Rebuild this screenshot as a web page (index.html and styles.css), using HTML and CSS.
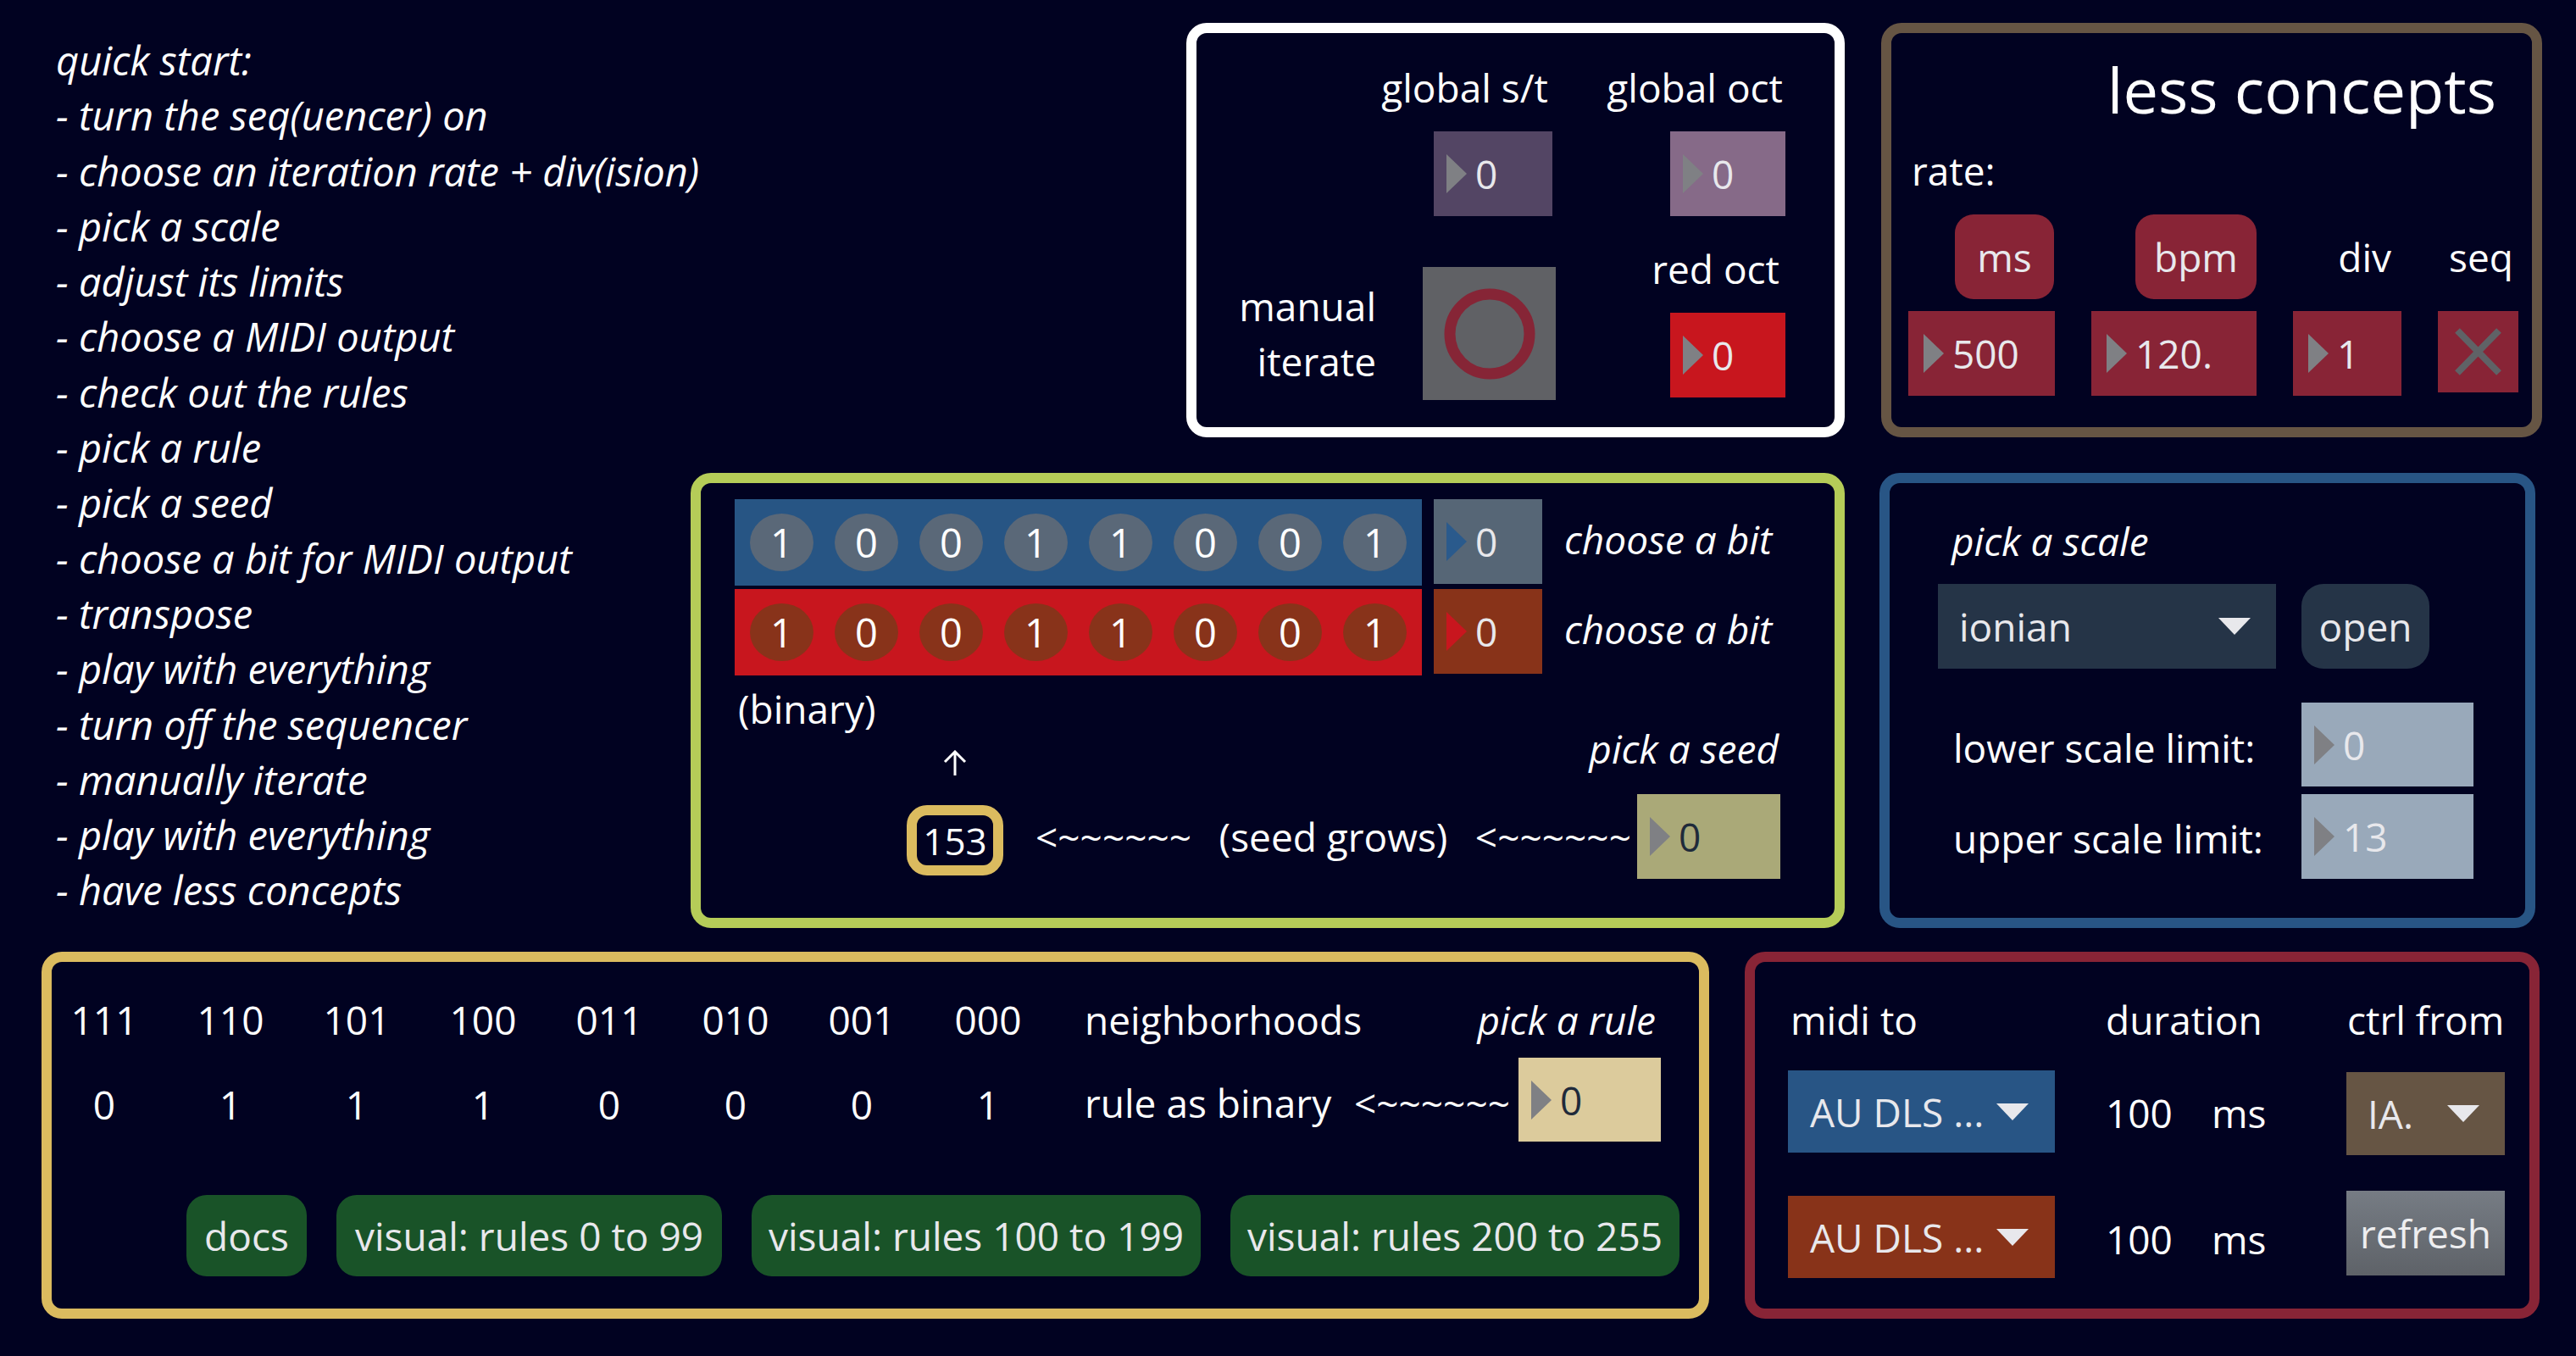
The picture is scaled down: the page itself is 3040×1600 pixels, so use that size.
FILE: index.html
```html
<!DOCTYPE html>
<html lang="en">
<head>
<meta charset="utf-8">
<title>less concepts</title>
<link rel="stylesheet" href="styles.css">
</head>
<body>
<main class="page">
  <div class="top">
    <div class="quick">
      <div>quick start:</div>
      <div>- turn the seq(uencer) on</div>
      <div>- choose an iteration rate + div(ision)</div>
      <div>- pick a scale</div>
      <div>- adjust its limits</div>
      <div>- choose a MIDI output</div>
      <div>- check out the rules</div>
      <div>- pick a rule</div>
      <div>- pick a seed</div>
      <div>- choose a bit for MIDI output</div>
      <div>- transpose</div>
      <div>- play with everything</div>
      <div>- turn off the sequencer</div>
      <div>- manually iterate</div>
      <div>- play with everything</div>
      <div>- have less concepts</div>
    </div>

    <section class="panel p-white">
      <div class="lbl w-lbl-st">global s/t</div>
      <div class="lbl w-lbl-oct">global oct</div>
      <div class="num w-st"><span class="tri"></span><span>0</span></div>
      <div class="num w-oct"><span class="tri"></span><span>0</span></div>
      <div class="w-manual">manual<br>iterate</div>
      <div class="w-btn">
        <svg width="120" height="120" viewBox="0 0 120 120"><circle cx="60" cy="60" r="47" fill="none" stroke="#862536" stroke-width="13"/></svg>
      </div>
      <div class="lbl w-lbl-red">red oct</div>
      <div class="num w-red"><span class="tri"></span><span>0</span></div>
    </section>

    <section class="panel p-brown">
      <div class="b-title">less concepts</div>
      <div class="lbl b-rate">rate:</div>
      <div class="btn b-ms">ms</div>
      <div class="btn b-bpm">bpm</div>
      <div class="lbl b-div">div</div>
      <div class="lbl b-seq">seq</div>
      <div class="num b-box b-500"><span class="tri"></span><span>500</span></div>
      <div class="num b-box b-120"><span class="tri"></span><span>120.</span></div>
      <div class="num b-box b-1"><span class="tri"></span><span>1</span></div>
      <div class="b-x">
        <svg width="95" height="96" viewBox="0 0 95 96"><path d="M23 23 L72 73 M72 23 L23 73" stroke="#5f6266" stroke-width="8" fill="none"/></svg>
      </div>
    </section>

    <section class="panel p-green">
      <div class="bits">
        <div class="bitbar bb-blue">
          <span class="bit">1</span><span class="bit">0</span><span class="bit">0</span><span class="bit">1</span><span class="bit">1</span><span class="bit">0</span><span class="bit">0</span><span class="bit">1</span>
        </div>
        <div class="num g-bluebox"><span class="tri"></span><span>0</span></div>
        <div class="lbl it g-choose">choose a bit</div>
        <div class="bitbar bb-red">
          <span class="bit">1</span><span class="bit">0</span><span class="bit">0</span><span class="bit">1</span><span class="bit">1</span><span class="bit">0</span><span class="bit">0</span><span class="bit">1</span>
        </div>
        <div class="num g-redbox"><span class="tri"></span><span>0</span></div>
        <div class="lbl it g-choose">choose a bit</div>
      </div>
      <div class="seedgrid">
        <div class="lbl g-binary">(binary)</div>
        <div class="g-up">
          <svg width="28" height="30" viewBox="0 0 28 30"><path d="M14 2 V30 M2 14 L14 2 L26 14" stroke="#ffffff" stroke-width="3" fill="none"/></svg>
        </div>
        <div class="lbl it g-seedlbl">pick a seed</div>
        <div class="g-out">153</div>
        <div class="g-flow"><span>&lt;~~~~~~</span><span>(seed grows)</span><span>&lt;~~~~~~</span></div>
        <div class="num g-seed"><span class="tri"></span><span>0</span></div>
      </div>
    </section>

    <section class="panel p-blue">
      <div class="lbl it s-title">pick a scale</div>
      <div class="dd s-dd"><span>ionian</span><span class="dtri"></span></div>
      <div class="btn s-open">open</div>
      <div class="lbl s-lower-l">lower scale limit:</div>
      <div class="num s-box s-lower"><span class="tri"></span><span>0</span></div>
      <div class="lbl s-upper-l">upper scale limit:</div>
      <div class="num s-box s-upper"><span class="tri"></span><span>13</span></div>
    </section>
  </div>

  <div class="bottom">
    <section class="panel p-gold">
      <div class="rules">
        <div class="nb">111</div><div class="nb">110</div><div class="nb">101</div><div class="nb">100</div><div class="nb">011</div><div class="nb">010</div><div class="nb">001</div><div class="nb">000</div>
        <div class="r-head"><span>neighborhoods</span><span class="it">pick a rule</span></div>
        <div class="rv">0</div><div class="rv">1</div><div class="rv">1</div><div class="rv">1</div><div class="rv">0</div><div class="rv">0</div><div class="rv">0</div><div class="rv">1</div>
        <div class="r-row">
          <span class="r-txt">rule as binary</span>
          <span class="r-txt r-arrow">&lt;~~~~~~</span>
          <div class="num r-box"><span class="tri"></span><span>0</span></div>
        </div>
      </div>
      <div class="r-btns">
        <div class="gbtn w-docs">docs</div>
        <div class="gbtn w-v1">visual: rules 0 to 99</div>
        <div class="gbtn w-v2">visual: rules 100 to 199</div>
        <div class="gbtn w-v3">visual: rules 200 to 255</div>
      </div>
    </section>

    <section class="panel p-red">
      <div class="lbl m-h1">midi to</div>
      <div class="lbl m-h2">duration</div>
      <div class="lbl m-h3">ctrl from</div>
      <div class="dd m-au1"><span>AU DLS ...</span><span class="dtri"></span></div>
      <div class="m-dur m-dur1"><span class="m-v">100</span><span>ms</span></div>
      <div class="dd m-ia"><span>IA.</span><span class="dtri"></span></div>
      <div class="dd m-au2"><span>AU DLS ...</span><span class="dtri"></span></div>
      <div class="m-dur m-dur2"><span class="m-v">100</span><span>ms</span></div>
      <div class="m-refresh">refresh</div>
    </section>
  </div>
</main>
</body>
</html>
```

FILE: styles.css
```css
html, body {
  margin: 0;
  padding: 0;
  background: #010221;
}
body {
  width: 3040px;
  height: 1600px;
  overflow: hidden;
  font-family: "Open Sans", "Noto Sans", sans-serif;
  font-size: 46px;
  color: #ffffff;
}
.page {
  padding-top: 27px;
}
.top {
  display: grid;
  grid-template-columns: 66px 749px 585px 777px 43px 780px;
  grid-template-rows: 489px 537px;
  row-gap: 42px;
}
.bottom {
  display: flex;
  gap: 42px;
  margin-top: 28px;
  padding-left: 49px;
}
.it { font-style: italic; }
.lbl {
  line-height: 60px;
  white-space: nowrap;
}

/* quick start */
.quick {
  grid-column: 2;
  grid-row: 1 / 3;
  padding-top: 12px;
  font-style: italic;
  font-size: 47px;
  line-height: 65.3px;
  white-space: nowrap;
}

/* panels */
.panel {
  box-sizing: border-box;
  border: 12px solid #fff;
  border-radius: 24px;
}

/* number boxes */
.num {
  box-sizing: border-box;
  display: flex;
  align-items: center;
  height: 100px;
  padding-left: 15px;
  color: #e8e8ec;
  font-size: 46px;
  white-space: nowrap;
}
.tri {
  flex: none;
  width: 0;
  height: 0;
  border-top: 23px solid transparent;
  border-bottom: 23px solid transparent;
  border-left: 24px solid #7f8084;
  margin-right: 10px;
}

/* buttons */
.btn {
  box-sizing: border-box;
  display: flex;
  align-items: center;
  justify-content: center;
  border-radius: 22px;
  color: #e8e8ec;
  height: 100px;
}

/* dropdown */
.dd {
  box-sizing: border-box;
  display: flex;
  align-items: center;
  justify-content: space-between;
  color: #e8e8ec;
  padding-left: 25px;
  padding-right: 30px;
  white-space: nowrap;
}
.dtri {
  flex: none;
  width: 0;
  height: 0;
  border-left: 19px solid transparent;
  border-right: 19px solid transparent;
  border-top: 20px solid #e8e8ec;
}

/* white panel */
.p-white {
  grid-column: 4;
  grid-row: 1;
  border-color: #ffffff;
  display: grid;
  grid-template-columns: 212px 157px 216px;
  column-gap: 55px;
  grid-template-rows: 82px 100px 114px 100px;
  align-content: start;
  padding-top: 34px;
}
.w-lbl-st {
  grid-column: 1 / 3;
  grid-row: 1;
  align-self: start;
  text-align: right;
  padding-right: 9px;
}
.w-lbl-oct {
  grid-column: 3;
  grid-row: 1;
  align-self: start;
  text-align: right;
  padding-right: 3px;
}
.w-st {
  grid-column: 2;
  grid-row: 2;
  width: 140px;
  justify-self: end;
  margin-right: 4px;
  background: #534564;
}
.w-oct {
  grid-column: 3;
  grid-row: 2;
  width: 136px;
  justify-self: end;
  background: #866a88;
}
.w-lbl-red {
  grid-column: 3;
  grid-row: 3;
  align-self: end;
  margin-bottom: 22px;
  text-align: right;
  padding-right: 7px;
}
.w-red {
  grid-column: 3;
  grid-row: 4;
  width: 136px;
  justify-self: end;
  background: #c8161e;
}
.w-btn {
  grid-column: 2;
  grid-row: 3 / 5;
  align-self: start;
  margin-top: 60px;
  width: 157px;
  height: 157px;
  background: #606165;
  display: flex;
  align-items: center;
  justify-content: center;
}
.w-manual {
  grid-column: 1;
  grid-row: 3 / 5;
  align-self: start;
  margin-top: 74px;
  text-align: right;
  line-height: 65px;
}

/* brown panel */
.p-brown {
  grid-column: 6;
  grid-row: 1;
  border-color: #665544;
  display: grid;
  grid-template-columns: 173px 195px 128px 95px;
  column-gap: 43px;
  grid-template-rows: 90px 102px 100px 114px;
  align-content: start;
  padding: 22px 0 0 20px;
}
.b-title {
  grid-column: 1 / -1;
  grid-row: 1;
  text-align: right;
  padding-right: 26px;
  font-size: 74px;
  line-height: 90px;
  white-space: nowrap;
}
.b-rate {
  grid-column: 1;
  grid-row: 2;
  align-self: start;
  margin-top: 20px;
  padding-left: 4px;
}
.b-ms {
  grid-column: 1;
  grid-row: 3;
  justify-self: end;
  width: 117px;
  margin-right: 1px;
  background: #882436;
}
.b-bpm {
  grid-column: 2;
  grid-row: 3;
  justify-self: end;
  width: 143px;
  background: #882436;
}
.b-div {
  grid-column: 3;
  grid-row: 3;
  justify-self: end;
  align-self: center;
  margin-right: 12px;
}
.b-seq {
  grid-column: 4;
  grid-row: 3;
  justify-self: end;
  align-self: center;
  margin-right: 6px;
}
.b-box {
  grid-row: 4;
  align-self: end;
  background: #882436;
  padding-left: 18px;
}
.b-500 { grid-column: 1; }
.b-120 { grid-column: 2; }
.b-1 { grid-column: 3; }
.b-x {
  grid-column: 4;
  grid-row: 4;
  align-self: start;
  margin-top: 14px;
  height: 96px;
  background: #882436;
}
.b-x svg { display: block; }

/* green panel */
.p-green {
  grid-column: 3 / 5;
  grid-row: 2;
  border-color: #b5cc58;
  padding: 19px 0 0 40px;
}
.bits {
  display: grid;
  grid-template-columns: 811px 128px auto;
  column-gap: 14px;
  grid-template-rows: 102px 102px;
  row-gap: 4px;
}
.bitbar {
  display: flex;
  align-items: center;
  padding-left: 18px;
  gap: 25px;
}
.bb-blue { background: #275584; }
.bb-red { background: #c8161e; }
.bit {
  width: 75px;
  height: 68px;
  border-radius: 50%;
  display: flex;
  align-items: center;
  justify-content: center;
  font-size: 47px;
  color: #ffffff;
}
.bb-blue .bit { background: #5a6878; }
.bb-red .bit { background: #88331a; }
.g-bluebox {
  align-self: start;
  background: #566676;
}
.g-bluebox .tri { border-left-color: #2a5a8c; }
.g-redbox {
  align-self: start;
  background: #883319;
}
.g-redbox .tri { border-left-color: #c8161e; }
.g-choose {
  align-self: center;
  margin-left: 12px;
  margin-top: -8px;
}
.seedgrid {
  display: grid;
  grid-template-columns: 203px 114px 748px 169px;
  grid-template-rows: 47px 81px 100px;
  margin-top: 12px;
}
.g-binary {
  grid-column: 1 / 3;
  grid-row: 1 / 3;
  align-self: start;
  padding-left: 4px;
  margin-top: -3px;
}
.g-up {
  grid-column: 2;
  grid-row: 2;
  justify-self: center;
  align-self: start;
  margin-top: 29px;
}
.g-up svg { display: block; }
.g-seedlbl {
  grid-column: 3 / 5;
  grid-row: 2;
  align-self: start;
  text-align: right;
  padding-right: 2px;
  margin-top: -3px;
}
.g-out {
  grid-column: 2;
  grid-row: 3;
  align-self: start;
  margin-top: 13px;
  box-sizing: border-box;
  height: 83px;
  border: 12px solid #dbbb5f;
  border-radius: 24px;
  display: flex;
  align-items: center;
  justify-content: center;
  font-size: 44px;
}
.g-flow {
  grid-column: 3;
  grid-row: 3;
  display: flex;
  align-items: center;
  justify-content: space-between;
  padding: 0 7px 0 38px;
  white-space: nowrap;
}
.g-seed {
  grid-column: 4;
  grid-row: 3;
  background: #aaa978;
  color: #1f2a3a;
}

/* blue panel */
.p-blue {
  grid-column: 6;
  grid-row: 2;
  width: 774px;
  margin-left: -2px;
  border-color: #285585;
  display: grid;
  grid-template-columns: 399px 203px;
  column-gap: 30px;
  grid-template-rows: 81px 100px 139px 109px;
  align-content: start;
  padding: 38px 0 0 57px;
}
.s-title {
  grid-column: 1 / -1;
  grid-row: 1;
  align-self: start;
  padding-left: 16px;
}
.s-dd {
  grid-column: 1;
  grid-row: 2;
  background: #253447;
}
.s-open {
  grid-column: 2;
  grid-row: 2;
  width: 151px;
  justify-self: start;
  background: #253447;
  border-radius: 26px;
}
.s-lower-l {
  grid-column: 1;
  grid-row: 3;
  align-self: end;
  margin-bottom: 16px;
  padding-left: 18px;
}
.s-upper-l {
  grid-column: 1;
  grid-row: 4;
  align-self: end;
  margin-bottom: 18px;
  padding-left: 18px;
}
.s-box {
  grid-column: 2;
  align-self: end;
  background: #99a9ba;
}
.s-lower { grid-row: 3; height: 99px; }
.s-upper { grid-row: 4; }

/* gold panel */
.p-gold {
  width: 1968px;
  height: 433px;
  border-color: #dbbb5f;
  padding: 38px 0 0 2px;
}
.rules {
  display: grid;
  grid-template-columns: repeat(8, 120px) 705px;
  column-gap: 29px;
  grid-template-rows: 75px 99px;
}
.nb {
  grid-row: 1;
  align-self: start;
  text-align: center;
  line-height: 60px;
}
.rv {
  grid-row: 2;
  align-self: start;
  margin-top: 25px;
  text-align: center;
  line-height: 60px;
}
.r-head {
  grid-column: 9;
  grid-row: 1;
  align-self: start;
  display: flex;
  justify-content: space-between;
  padding: 0 6px 0 25px;
  line-height: 60px;
  white-space: nowrap;
}
.r-row {
  grid-column: 9;
  grid-row: 2;
  display: flex;
  align-items: center;
  padding-left: 25px;
  white-space: nowrap;
}
.r-txt {
  padding-top: 6px;
}
.r-arrow {
  margin-left: auto;
  margin-right: 10px;
}
.r-box {
  width: 168px;
  height: 99px;
  background: #dccb9c;
  color: #1f2a3a;
}
.r-btns {
  display: flex;
  gap: 35px;
  margin-top: 63px;
  padding-left: 157px;
}
.gbtn {
  height: 96px;
  box-sizing: border-box;
  display: flex;
  align-items: center;
  justify-content: center;
  background: #195328;
  border-radius: 24px;
  color: #e8e8ec;
  white-space: nowrap;
}
.w-docs { width: 142px; }
.w-v1 { width: 455px; }
.w-v2 { width: 530px; }
.w-v3 { width: 530px; }

/* red panel */
.p-red {
  width: 938px;
  height: 433px;
  border-color: #882436;
  display: grid;
  grid-template-columns: 315px 1fr 187px;
  grid-template-rows: 90px 100px 146px;
  align-content: start;
  padding: 38px 29px 0 39px;
}
.m-h1 { grid-column: 1; grid-row: 1; align-self: start; padding-left: 3px; }
.m-h2 { grid-column: 2; grid-row: 1; align-self: start; padding-left: 60px; }
.m-h3 { grid-column: 3; grid-row: 1; align-self: start; padding-left: 1px; }
.m-au1 {
  grid-column: 1;
  grid-row: 2;
  align-self: start;
  height: 97px;
  background: #285585;
  padding-right: 31px;
  padding-left: 26px;
}
.m-au2 {
  grid-column: 1;
  grid-row: 3;
  align-self: end;
  margin-bottom: 1px;
  height: 97px;
  background: #883319;
  padding-right: 31px;
  padding-left: 26px;
}
.m-ia {
  grid-column: 3;
  grid-row: 2;
  align-self: end;
  height: 98px;
  background: #665544;
}
.m-dur {
  grid-column: 2;
  display: flex;
  padding-left: 60px;
  line-height: 60px;
}
.m-v { width: 125px; }
.m-dur1 { grid-row: 2; align-self: center; }
.m-dur2 { grid-row: 3; align-self: end; margin-bottom: 17px; }
.m-refresh {
  grid-column: 3;
  grid-row: 3;
  align-self: end;
  margin-bottom: 4px;
  height: 100px;
  display: flex;
  align-items: center;
  justify-content: center;
  background: linear-gradient(#767c84, #5e6268);
  color: #eeeef0;
}
```
